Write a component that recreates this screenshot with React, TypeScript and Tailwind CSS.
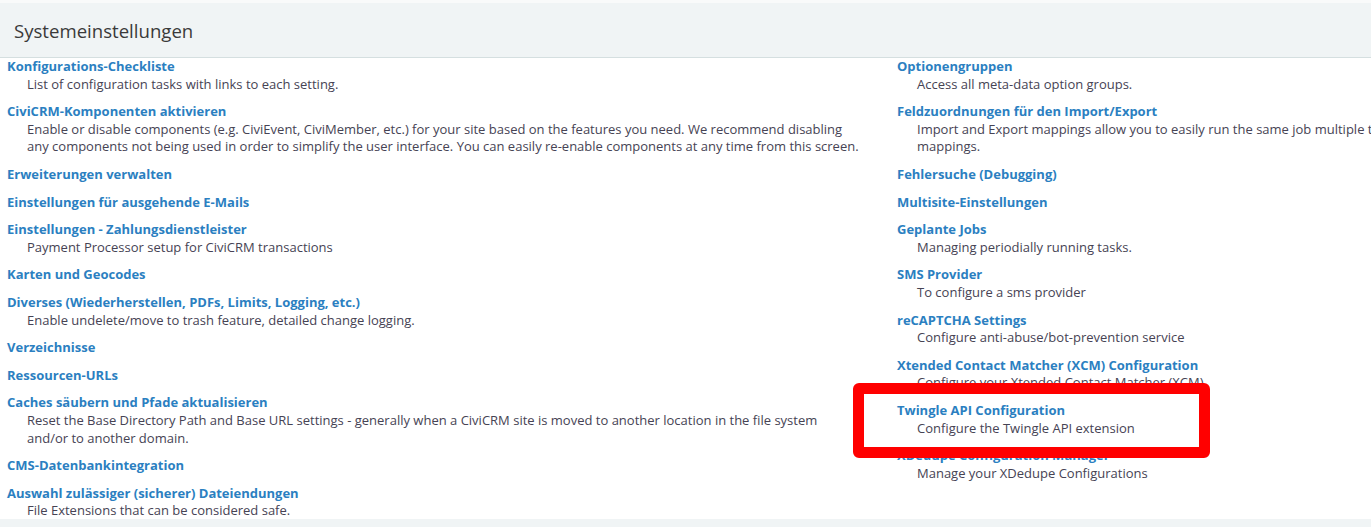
type Item = { title: string; desc?: string[] };

const left: Item[] = [
  { title: "Konfigurations-Checkliste", desc: ["List of configuration tasks with links to each setting."] },
  {
    title: "CiviCRM-Komponenten aktivieren",
    desc: [
      "Enable or disable components (e.g. CiviEvent, CiviMember, etc.) for your site based on the features you need. We recommend disabling any components not being used in order to simplify the user interface. You can easily re-enable components at any time from this screen.",
    ],
  },
  { title: "Erweiterungen verwalten" },
  { title: "Einstellungen für ausgehende E-Mails" },
  { title: "Einstellungen - Zahlungsdienstleister", desc: ["Payment Processor setup for CiviCRM transactions"] },
  { title: "Karten und Geocodes" },
  {
    title: "Diverses (Wiederherstellen, PDFs, Limits, Logging, etc.)",
    desc: ["Enable undelete/move to trash feature, detailed change logging."],
  },
  { title: "Verzeichnisse" },
  { title: "Ressourcen-URLs" },
  {
    title: "Caches säubern und Pfade aktualisieren",
    desc: [
      "Reset the Base Directory Path and Base URL settings - generally when a CiviCRM site is moved to another location in the file system and/or to another domain.",
    ],
  },
  { title: "CMS-Datenbankintegration" },
  { title: "Auswahl zulässiger (sicherer) Dateiendungen", desc: ["File Extensions that can be considered safe."] },
];

const right: Item[] = [
  { title: "Optionengruppen", desc: ["Access all meta-data option groups."] },
  {
    title: "Feldzuordnungen für den Import/Export",
    desc: [
      "Import and Export mappings allow you to easily run the same job multiple times. This option allows you to rename or delete existing",
      "mappings.",
    ],
  },
  { title: "Fehlersuche (Debugging)" },
  { title: "Multisite-Einstellungen" },
  { title: "Geplante Jobs", desc: ["Managing periodially running tasks."] },
  { title: "SMS Provider", desc: ["To configure a sms provider"] },
  { title: "reCAPTCHA Settings", desc: ["Configure anti-abuse/bot-prevention service"] },
  {
    title: "Xtended Contact Matcher (XCM) Configuration",
    desc: ["Configure your Xtended Contact Matcher (XCM)"],
  },
  { title: "Twingle API Configuration", desc: ["Configure the Twingle API extension"] },
  { title: "XDedupe Configuration Manager", desc: ["Manage your XDedupe Configurations"] },
];

function Column({ items, className }: { items: Item[]; className: string }) {
  return (
    <dl className={`flex shrink-0 flex-col gap-[10px] ${className}`}>
      {items.map((item) => (
        <div key={item.title}>
          <dt>
            <a href="#" className="font-bold text-[#2b7fc1]">
              {item.title}
            </a>
          </dt>
          {item.desc && (
            <dd className="pl-[20px] pr-[30px] text-[#464354]">
              {item.desc.map((line) => (
                <div key={line}>{line}</div>
              ))}
            </dd>
          )}
        </div>
      ))}
    </dl>
  );
}

export default function App() {
  return (
    <div
      className="relative h-[527px] w-[1371px] overflow-hidden bg-white pt-[3px] text-[13px] leading-[17.6px]"
      style={{ fontFamily: '"Open Sans", "Liberation Sans", sans-serif' }}
    >
      <div className="absolute inset-x-0 top-0 h-[3px] bg-[#f9fafa]" />
      <div className="flex h-[55px] items-center border-b border-[#d5dfe0] bg-[#f0f4f5] px-[14px] pt-[2px] text-[18.6px] text-[#3a3a3a]">
        Systemeinstellungen
      </div>
      <div className="flex h-[461px]">
        <Column items={left} className="w-[890px] pl-[7px]" />
        <Column items={right} className="w-[890px] pl-[7px]" />
      </div>
      <div className="h-[8px] bg-[#f0f4f5]" />

      {/* annotation box */}
      <div className="absolute left-[853px] top-[383px] h-[75px] w-[357px] rounded-[6px] border-[11px] border-[#ff0000]" />
    </div>
  );
}
